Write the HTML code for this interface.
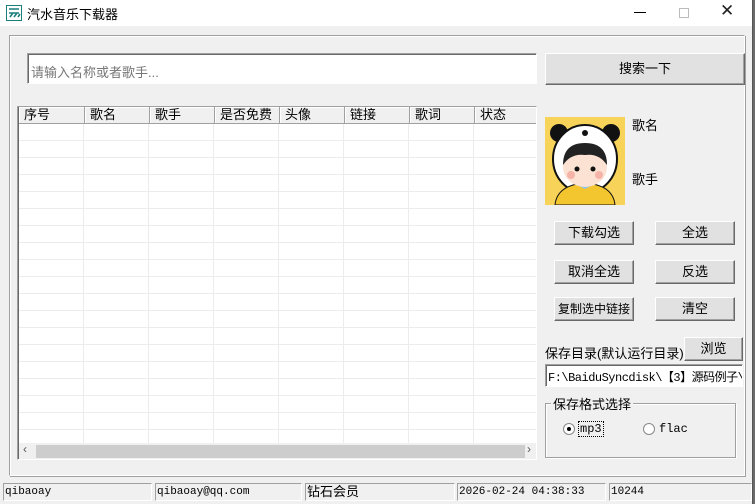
<!DOCTYPE html>
<html><head><meta charset="utf-8"><style>
*{margin:0;padding:0;box-sizing:border-box}
body{width:755px;height:504px;overflow:hidden;background:#6b6b6b;font-family:"Liberation Sans","Noto Sans CJK SC",sans-serif;font-size:12px;color:#000;position:relative}
.a{position:absolute}
.win{left:0;top:0;width:753px;height:504px;background:#f0f0f0;border-right:1px solid #555}
.title{left:0;top:0;width:752px;height:26px;background:#fff}
.btn{position:absolute;background:#e1e1e1;border:1px solid;border-color:#fff #696969 #696969 #fff;box-shadow:inset -1px -1px 0 #a0a0a0;text-align:center;font-size:13px}
.inp{position:absolute;background:#fff;border:1px solid;border-color:#a0a0a0 #fff #fff #a0a0a0;box-shadow:inset 1px 1px 0 #696969}
.hd{position:absolute;top:0;height:17px;border-right:1px solid #a0a0a0;border-bottom:1px solid #a0a0a0;background:#f0f0f0;padding-left:5px;font-size:13px;line-height:16px;box-shadow:inset 1px 1px 0 #fff}
.st{position:absolute;top:483px;height:18px;border:1px solid;border-color:#a0a0a0 #fff #fff #a0a0a0;font-family:"Liberation Mono","Noto Sans CJK SC",monospace;font-size:11px;line-height:16px;padding-left:1px}
</style></head><body>
<div class="a win"></div>
<div class="a title"></div>
<svg class="a" style="left:6px;top:5px" width="16" height="16"><rect x="0.5" y="0.5" width="15" height="15" fill="#fff" stroke="#1a7f7a"/><path d="M3 4h10M3 8h10M4 12l3-4M8 12l3-4M12 12l2-3" stroke="#1a7f7a" stroke-width="1.6" fill="none"/></svg>
<div class="a" style="left:27px;top:4px;font-size:13px">汽水音乐下载器</div>
<div class="a" style="left:634px;top:12px;width:12px;height:1px;background:#000"></div>
<div class="a" style="left:679px;top:8px;width:10px;height:10px;border:1px solid #bbb"></div>
<div class="a" style="left:720px;top:1px;font-size:17px;color:#222">✕</div>
<div class="a" style="left:9px;top:35px;width:736px;height:441px;border:1px solid;border-color:#a0a0a0 #fff #fff #a0a0a0;box-shadow:1px 1px 0 #a0a0a0, inset 1px 1px 0 #fff"></div>
<div class="inp" style="left:27px;top:53px;width:510px;height:31px"><span class="a" style="left:3px;top:8px;color:#777;font-size:13px">请输入名称或者歌手...</span></div>
<div class="btn" style="left:545px;top:53px;width:200px;height:32px;line-height:30px">搜索一下</div>
<div class="a" style="left:17px;top:106px;width:520px;height:354px;background:#fff;border:1px solid;border-color:#a0a0a0 #fff #fff #a0a0a0;box-shadow:inset 1px 1px 0 #696969;overflow:hidden">
 <div class="a" style="left:1px;top:17px;width:520px;height:320px;background:repeating-linear-gradient(to bottom,transparent 0 16px,#ececec 16px 17px),repeating-linear-gradient(to right,transparent 0 64px,#ececec 64px 65px)"></div>
 <div class="hd" style="left:1px;width:66px">序号</div>
 <div class="hd" style="left:67px;width:65px">歌名</div>
 <div class="hd" style="left:132px;width:65px">歌手</div>
 <div class="hd" style="left:197px;width:65px">是否免费</div>
 <div class="hd" style="left:262px;width:65px">头像</div>
 <div class="hd" style="left:327px;width:65px">链接</div>
 <div class="hd" style="left:392px;width:65px">歌词</div>
 <div class="hd" style="left:457px;width:65px">状态</div>
 <div class="a" style="left:1px;top:336px;width:518px;height:16px;background:#f0f0f0"></div>
 <div class="a" style="left:18px;top:338px;width:489px;height:13px;background:#cdcdcd"></div>
 <div class="a" style="left:5px;top:335px;font-size:12px;color:#555">‹</div>
 <div class="a" style="left:509px;top:335px;font-size:12px;color:#555">›</div>
</div>
<svg class="a" style="left:545px;top:117px" width="80" height="88" viewBox="0 0 80 88"><rect width="80" height="88" fill="#f7d35a"/><circle cx="14" cy="16" r="9" fill="#111"/><circle cx="66" cy="16" r="9" fill="#111"/><ellipse cx="40" cy="42" rx="32" ry="34" fill="#fff" stroke="#111" stroke-width="2"/><path d="M10 88 q2-20 30-22 q28 2 30 22z" fill="#f3c52e" stroke="#111"/><path d="M28 66h24l-12 6z" fill="#8cc4ea"/><ellipse cx="40" cy="50" rx="22" ry="20" fill="#fbe2d2"/><path d="M18 48 q0-22 22-22 q22 0 22 22 q-8-12-22-10 q-14-2-22 10z" fill="#222"/><circle cx="32" cy="52" r="2.5" fill="#111"/><circle cx="48" cy="52" r="2.5" fill="#111"/><circle cx="26" cy="58" r="4" fill="#f6b4a8"/><circle cx="54" cy="58" r="4" fill="#f6b4a8"/><circle cx="40" cy="16" r="3" fill="#111"/></svg>
<div class="a" style="left:632px;top:115px;font-size:13px">歌名</div>
<div class="a" style="left:632px;top:169px;font-size:13px">歌手</div>
<div class="btn" style="left:554px;top:221px;width:80px;height:24px;line-height:22px">下载勾选</div>
<div class="btn" style="left:655px;top:221px;width:80px;height:24px;line-height:22px">全选</div>
<div class="btn" style="left:554px;top:260px;width:80px;height:24px;line-height:22px">取消全选</div>
<div class="btn" style="left:655px;top:260px;width:80px;height:24px;line-height:22px">反选</div>
<div class="btn" style="left:554px;top:297px;width:80px;height:24px;line-height:22px;font-size:12px">复制选中链接</div>
<div class="btn" style="left:655px;top:297px;width:80px;height:24px;line-height:22px">清空</div>
<div class="a" style="left:545px;top:343px;font-size:13px">保存目录(默认运行目录)</div>
<div class="btn" style="left:684px;top:337px;width:59px;height:24px;line-height:22px">浏览</div>
<div class="inp" style="left:545px;top:364px;width:198px;height:23px;overflow:hidden;white-space:nowrap"><span class="a" style="left:2px;top:3px;font-family:'Liberation Mono','Noto Sans CJK SC',monospace;font-size:12px;letter-spacing:-0.5px">F:\BaiduSyncdisk\【3】源码例子\源</span></div>
<div class="a" style="left:545px;top:403px;width:191px;height:55px;border:1px solid #a0a0a0;box-shadow:inset 1px 1px 0 #fff,1px 1px 0 #fff"></div>
<div class="a" style="left:551px;top:394px;font-size:13px;background:#f0f0f0;padding:0 2px">保存格式选择</div>
<div class="a" style="left:563px;top:423px;width:12px;height:12px;border-radius:50%;background:#fff;border:1px solid #888"><div class="a" style="left:3px;top:3px;width:4px;height:4px;border-radius:50%;background:#000"></div></div>
<div class="a" style="left:578px;top:421px;font-family:'Liberation Mono',monospace;font-size:12px;border:1px dotted #000;padding:0 1px">mp3</div>
<div class="a" style="left:643px;top:423px;width:12px;height:12px;border-radius:50%;background:#fff;border:1px solid #888"></div>
<div class="a" style="left:659px;top:422px;font-family:'Liberation Mono',monospace;font-size:12px">flac</div>
<div class="st" style="left:3px;width:149px">qibaoay</div>
<div class="st" style="left:155px;width:147px">qibaoay@qq.com</div>
<div class="st" style="left:305px;width:150px;font-size:13px;font-family:'Liberation Sans','Noto Sans CJK SC',sans-serif">钻石会员</div>
<div class="st" style="left:457px;width:149px">2026-02-24 04:38:33</div>
<div class="st" style="left:609px;width:143px">10244</div>
</body></html>
